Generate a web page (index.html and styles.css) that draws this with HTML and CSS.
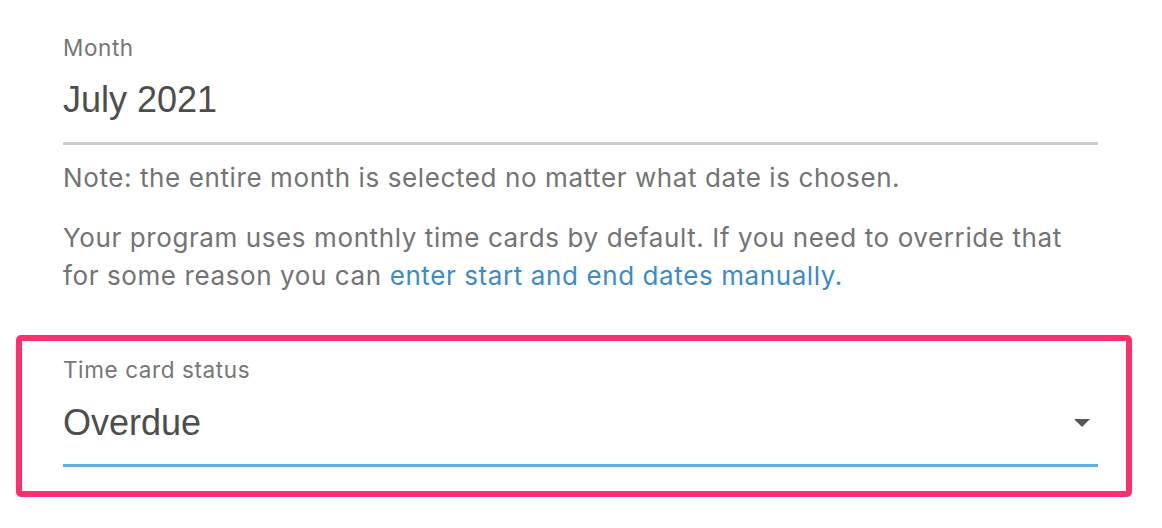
FILE: index.html
```html
<!DOCTYPE html>
<html lang="en">
<head>
<meta charset="utf-8">
<title>Time card</title>
<link rel="stylesheet" href="styles.css">
</head>
<body>
<div class="page">
  <div class="top">
    <div class="field month-field">
      <div class="label">Month</div>
      <div class="value">July 2021</div>
    </div>
    <p class="note">Note: the entire month is selected no matter what date is chosen.</p>
    <p class="info">Your program uses monthly time cards by default. If you need to override that for some reason you can <a class="link" href="#">enter start and end dates manually.</a></p>
  </div>
  <div class="highlight">
    <div class="field select-field">
      <div class="label">Time card status</div>
      <div class="select-row">
        <div class="value">Overdue</div>
        <svg class="caret" width="16" height="8" viewBox="0 0 16 8"><path d="M0 0 L16 0 L8 8 Z" fill="#555"/></svg>
      </div>
    </div>
  </div>
</div>
</body>
</html>
```

FILE: styles.css
```css
html, body {
  margin: 0;
  padding: 0;
  background: #ffffff;
}

body {
  font-family: "Inter", "Liberation Sans", Arial, sans-serif;
  color: #4f4f4f;
}

.page {
  width: 1162px;
  height: 528px;
  overflow: hidden;
}

.top {
  padding: 36px 0 0 63px;
  width: 1035px;
}

.label {
  font-size: 22.5px;
  line-height: 24px;
  letter-spacing: 0.6px;
  color: #767676;
}

.value {
  font-family: "Liberation Sans", Arial, sans-serif;
  font-size: 36px;
  line-height: 40px;
  color: #4d4d4d;
}

.month-field {
  border-bottom: 3px solid #cccccc;
}

.month-field .value {
  margin-top: 20px;
  padding-bottom: 22px;
}

.note,
.info {
  margin: 0;
  font-size: 26px;
  line-height: 38px;
  letter-spacing: 0.6px;
  color: #737373;
}

.note {
  margin-top: 14px;
}

.info {
  margin-top: 22px;
}

.link {
  color: #3d8ac8;
  text-decoration: none;
}

.highlight {
  margin: 40px 0 0 16px;
  width: 1116px;
  box-sizing: border-box;
  border: 6px solid #fd2f6c;
  border-radius: 5px;
  padding: 17px 28px 24px 41px;
}

.select-field {
  border-bottom: 3px solid #63ade3;
}

.select-row {
  display: flex;
  align-items: center;
  justify-content: space-between;
  margin-top: 21px;
  padding-bottom: 21px;
}

.caret {
  display: block;
  margin-right: 8px;
}
```
